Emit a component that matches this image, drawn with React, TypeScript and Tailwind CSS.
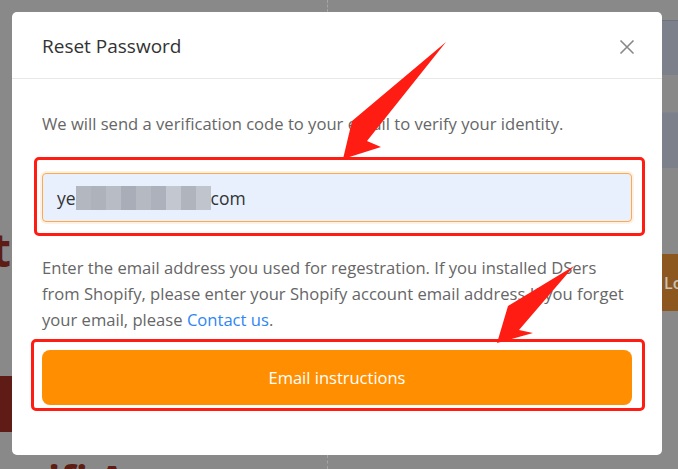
import React from 'react';

const font = { fontFamily: '"Open Sans", "Noto Sans", Arial, sans-serif' };

// pixelated blur over the hidden part of the address
const blurBlocks = ['#b3b7c0', '#aeb2bb', '#b8bcc5', '#a9adb7', '#b5b9c2', '#adb1bb', '#c3c7cf', '#b0b4bd', '#c0c4cc'];

const Backdrop: React.FC = () => (
  <>
    <div className="absolute left-[327px] top-0 h-[12px] border-l border-dashed border-[#a5a5a5]" />
    <div className="absolute left-[327px] top-[455px] h-[14px] border-l border-dashed border-[#a5a5a5]" />
    <span className="absolute left-[-9px] top-[226px] text-[46px] font-bold leading-none text-[#5c1d14]">t</span>
    <div className="absolute left-0 top-[376px] h-[56px] w-[12px] bg-[#5f1b15]" />
    <span className="absolute left-[48px] top-[459px] text-[40px] font-bold leading-none text-[#5c1d14]">ifi A</span>
    <div className="absolute right-0 top-[20px] h-[55px] w-[16px] border-t border-[#6f737b] bg-[#7b808a]" />
    <div className="absolute right-0 top-[112px] h-[56px] w-[16px] border-t border-[#80848c] bg-[#7b808a]" />
    <div className="absolute right-0 top-[254px] flex h-[57px] w-[16px] items-center overflow-hidden bg-[#8c5820]">
      <span className="pl-[2px] text-[16px] font-semibold text-[#c9c2b8]">Lo</span>
    </div>
  </>
);

const Arrows: React.FC = () => (
  <svg className="pointer-events-none absolute left-0 top-0" width="678" height="469" viewBox="0 0 678 469">
    <polygon points="446,42 352,121 343,159 381,147 367,141" fill="#ff1c12" />
    <polygon points="574,266 508,306 497,343 533,333 519,330" fill="#ff1c12" />
  </svg>
);

export default function App() {
  return (
    <div className="relative h-[469px] w-[678px] overflow-hidden bg-[#898989]" style={font}>
      <Backdrop />

      <div className="absolute left-[12px] top-[12px] flex h-[443px] w-[650px] flex-col rounded-[5px] bg-white">
        <div className="flex h-[67px] shrink-0 items-center justify-between border-b border-[#e8e8e8] pl-[30px] pr-[27px] pt-[3px]">
          <span className="text-[19px] leading-none text-[#333]">Reset Password</span>
          <svg width="16" height="16" viewBox="0 0 16 16" className="text-[#888]">
            <path d="M1.5 1.5 L14.5 14.5 M14.5 1.5 L1.5 14.5" stroke="currentColor" strokeWidth="1.6" />
          </svg>
        </div>

        <div className="relative flex flex-col px-[30px] pt-[32px] text-[16.6px] leading-[26px] text-[#666]">
          <p>We will send a verification code to your email to verify your identity.</p>

          <div className="relative mt-[36px]">
            <div className="absolute -left-[8px] -right-[13px] -top-[16px] -bottom-[14px] rounded-[5px] border-[3px] border-[#ff1c12]" />
            <div className="flex h-[49px] items-center rounded-[4px] border border-[#ffa94d] bg-[#e8f0fe] pl-[14px] text-[17.5px] text-[#333] shadow-[0_0_0_2px_rgba(255,169,77,0.15)]">
              <span>ye</span>
              <span className="flex h-[24px] items-center">
                {blurBlocks.map((c, i) => (
                  <span key={i} className="block h-[24px] w-[15px]" style={{ backgroundColor: c }} />
                ))}
              </span>
              <span>com</span>
            </div>
          </div>

          <p className="mt-[33px]">
            Enter the email address you used for regestration. If you installed DSers from Shopify, please enter your
            Shopify account email address If you forget your email, please <span className="text-[#2e86f5]">Contact us</span>.
          </p>

          <div className="relative mt-[17px]">
            <div className="absolute -left-[11px] -right-[13px] -top-[11px] -bottom-[6px] rounded-[5px] border-[3px] border-[#ff1c12]" />
            <button className="flex h-[55px] w-full items-center justify-center rounded-[8px] bg-[#ff8f00] text-[16.5px] text-white">
              Email instructions
            </button>
          </div>
        </div>
      </div>

      <Arrows />
    </div>
  );
}
